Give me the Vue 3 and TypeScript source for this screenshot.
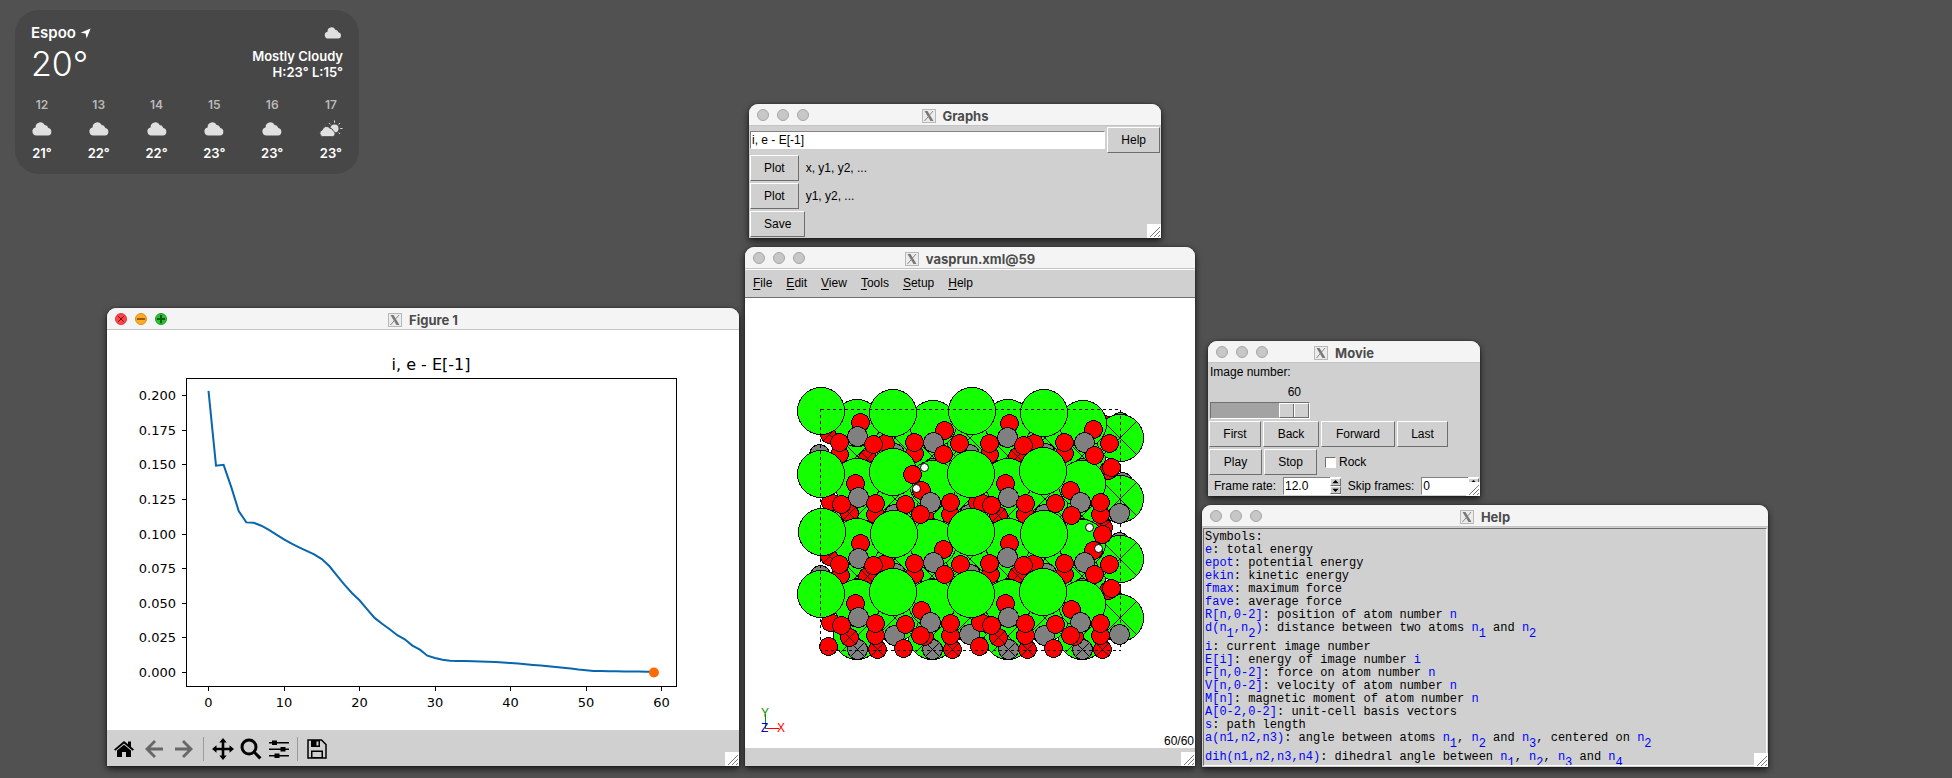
<script setup lang="ts">
import { ref } from 'vue'

interface DesktopWindow {
  id: 'graphs' | 'viewer' | 'figure' | 'movie' | 'help'
  title: string
  active?: boolean
}

const windows: DesktopWindow[] = [
  { id: 'graphs', title: 'Graphs' },
  { id: 'viewer', title: 'vasprun.xml@59' },
  { id: 'figure', title: 'Figure 1', active: true },
  { id: 'movie', title: 'Movie' },
  { id: 'help', title: 'Help' },
]

const hours = [
  { hour: '12', temp: '21°', sun: false },
  { hour: '13', temp: '22°', sun: false },
  { hour: '14', temp: '22°', sun: false },
  { hour: '15', temp: '23°', sun: false },
  { hour: '16', temp: '23°', sun: false },
  { hour: '17', temp: '23°', sun: true },
]

const menus = ['File', 'Edit', 'View', 'Tools', 'Setup', 'Help']

const expression = ref('i, e - E[-1]')
const imageNumber = ref(60)
const rock = ref(false)
const frameRate = ref('12.0')
const skipFrames = ref('0')

/* Energies relative to the last image */
const energies = [
  0.2033, 0.1493, 0.15, 0.134, 0.1166, 0.1084, 0.1081, 0.106, 0.103, 0.0995,
  0.0962, 0.093, 0.0904, 0.0879, 0.0853, 0.0819, 0.0769, 0.0702, 0.0634, 0.0574,
  0.0521, 0.0458, 0.0394, 0.0352, 0.0312, 0.0269, 0.024, 0.0194, 0.0165, 0.0121,
  0.0105, 0.0092, 0.0085, 0.0084, 0.0083, 0.0081, 0.0079, 0.0077, 0.0075, 0.0072,
  0.0068, 0.0064, 0.0059, 0.0055, 0.005, 0.0045, 0.004, 0.0034, 0.0028, 0.0021,
  0.0016, 0.001, 0.001, 0.0009, 0.0009, 0.0008, 0.0008, 0.0007, 0.0006, 0.0005,
]
const px = (i: number): number => 101.5 + i * 7.55
const py = (e: number): number => 342.5 - e * 1385
const curve = energies.map((e, i) => `${px(i).toFixed(1)},${py(e).toFixed(1)}`).join(' ')
const xTicks = [0, 10, 20, 30, 40, 50, 60]
const yTicks = [0, 0.025, 0.05, 0.075, 0.1, 0.125, 0.15, 0.175, 0.2]

/* Atoms, listed from the back of the cell to the front */
type Point = [number, number]
interface Layer {
  kind: 'cl' | 'o' | 'c' | 'h'
  r: number
  fixed?: boolean
  at: Point[]
}
const grid = (xs: number[], ys: number[]): Point[] => ys.flatMap(y => xs.map(x => [x, y] as Point))

const layers: Layer[] = [
  { kind: 'cl', r: 23.5, fixed: true, at: grid([112, 187, 263, 337], [158, 218, 278, 338]) },
  { kind: 'c', r: 10, at: [[375, 124], [377, 184], [374, 244], [374, 305]] },
  { kind: 'o', r: 9, at: [[357, 125]] },
  { kind: 'cl', r: 23.5, fixed: true, at: grid([150, 225, 300], [140, 201, 261, 320]) },
  { kind: 'cl', r: 23.5, fixed: true, at: grid([375], [140, 201, 261, 320]) },
  { kind: 'c', r: 10, fixed: true, at: grid([112, 187, 263, 337], [170, 230, 290, 351]) },
  {
    kind: 'c', r: 10, at: [
      [74, 156], [149, 155], [224, 156], [300, 155], [149, 216], [224, 216], [299, 216],
      [75, 277], [150, 275], [225, 276], [301, 275], [149, 337], [224, 336], [299, 337],
    ],
  },
  {
    kind: 'o', r: 9, fixed: true, at: [
      [84, 136], [122, 160], [272, 158], [363, 172], [104, 215], [253, 217], [84, 258],
      [122, 278], [272, 277], [358, 229], [363, 292], [104, 339], [253, 339],
      [132, 351], [207, 351], [282, 351], [357, 351],
    ],
  },
  {
    kind: 'o', r: 9, at: [
      [140, 145], [94, 156], [169, 155], [289, 145], [244, 156], [319, 155],
      [85, 204], [130, 216], [205, 216], [232, 204], [237, 205], [280, 216], [179, 217],
      [140, 265], [95, 277], [169, 276], [289, 265], [245, 276], [319, 276],
      [85, 324], [130, 337], [205, 337], [235, 324], [280, 337], [355, 337],
      [179, 338], [329, 338], [355, 216],
    ],
  },
  {
    kind: 'cl', r: 23.5, at: [
      [112, 125], [188, 126], [263, 125], [338, 126], [112, 184], [188, 186], [263, 184], [337, 186],
      [112, 244], [188, 245], [263, 244], [337, 245], [112, 305], [187, 305], [263, 305], [337, 306],
    ],
  },
  {
    kind: 'o', r: 9, at: [
      [115, 124], [199, 132], [264, 125], [348, 131], [110, 185], [176, 192], [260, 185], [325, 192],
      [115, 245], [198, 251], [264, 245], [348, 252], [110, 305], [176, 312], [260, 305], [326, 311],
    ],
  },
  {
    kind: 'c', r: 10, at: [
      [112, 138], [188, 144], [262, 139], [339, 144], [113, 199], [185, 204], [263, 199], [335, 204],
      [113, 260], [188, 264], [262, 259], [339, 264], [113, 319], [185, 324], [263, 319], [335, 324],
    ],
  },
  {
    kind: 'o', r: 9, at: [
      [94, 144], [128, 146], [169, 144], [214, 145], [198, 156],
      [244, 145], [278, 147], [319, 144], [364, 145], [349, 157],
      [96, 206], [130, 205], [160, 206], [205, 204], [175, 216],
      [246, 207], [280, 205], [310, 205], [355, 204], [326, 217],
      [94, 266], [128, 267], [169, 265], [215, 266], [199, 276],
      [244, 265], [278, 267], [319, 265], [364, 266], [349, 276],
      [96, 327], [130, 325], [160, 326], [205, 325], [175, 337],
      [246, 327], [280, 325], [310, 326], [355, 325], [325, 337],
      [83, 348], [158, 350], [234, 348], [308, 350], [366, 169], [366, 290], [357, 236],
    ],
  },
  {
    kind: 'cl', r: 23.5, at: [
      [76, 113], [148, 115], [227, 113], [299, 115], [76, 176], [148, 174], [226, 176], [298, 173],
      [77, 234], [149, 236], [226, 234], [299, 236], [76, 296], [148, 294], [226, 296], [298, 294],
    ],
  },
  { kind: 'o', r: 9, at: [[167, 176]] },
  { kind: 'h', r: 4, at: [[179, 169], [171, 190], [344, 229], [353, 250]] },
]
const atoms = layers.flatMap(l => {
  const shift = l.kind === 'cl' ? 0 : 0.5
  return l.at.map(([x, y]) => ({ x: x + shift, y: y + shift, r: l.r, kind: l.kind, d: l.fixed ? l.r * 0.7 : 0 }))
})
const cornerAtoms: Point[] = [[374.5, 215.5], [374.5, 336.5]]

/* Help text: `code` marks an expression, `sub` its lowered index */
type Part = [string, ('code' | 'sub')?]
const n = (i: number): Part[] => [['n', 'code'], [String(i), 'sub']]
const helpLines: Part[][] = [
  [['Symbols:']],
  [['e', 'code'], [': total energy']],
  [['epot', 'code'], [': potential energy']],
  [['ekin', 'code'], [': kinetic energy']],
  [['fmax', 'code'], [': maximum force']],
  [['fave', 'code'], [': average force']],
  [['R[n,0-2]', 'code'], [': position of atom number '], ['n', 'code']],
  [['d(n', 'code'], ['1', 'sub'], [',n', 'code'], ['2', 'sub'], [')', 'code'], [': distance between two atoms '], ...n(1), [' and '], ...n(2)],
  [['i', 'code'], [': current image number']],
  [['E[i]', 'code'], [': energy of image number '], ['i', 'code']],
  [['F[n,0-2]', 'code'], [': force on atom number '], ['n', 'code']],
  [['V[n,0-2]', 'code'], [': velocity of atom number '], ['n', 'code']],
  [['M[n]', 'code'], [': magnetic moment of atom number '], ['n', 'code']],
  [['A[0-2,0-2]', 'code'], [': unit-cell basis vectors']],
  [['s', 'code'], [': path length']],
  [['a(n1,n2,n3)', 'code'], [': angle between atoms '], ...n(1), [', '], ...n(2), [' and '], ...n(3), [', centered on '], ...n(2)],
  [['dih(n1,n2,n3,n4)', 'code'], [': dihedral angle between '], ...n(1), [', '], ...n(2), [', '], ...n(3), [' and '], ...n(4)],
]
</script>

<template>
  <main class="desktop">
    <section class="weather" aria-label="Weather">
      <div class="weather-now">
        <div>
          <div class="city">
            Espoo
            <svg width="11" height="11" viewBox="0 0 11 11" aria-hidden="true"><path d="M10.6.4 6.6 10.4 5.6 5.6.6 4.8z" /></svg>
          </div>
          <div class="temp-now">20°</div>
        </div>
        <div class="summary">
          <svg class="cloud-small" viewBox="0 0 20 14" aria-hidden="true"><path d="M4.4 13.5A4.1 4.1 0 0 1 3.6 5.4A4.8 4.8 0 0 1 12.7 3.1A4 4 0 0 1 16.3 6A3.8 3.8 0 0 1 16 13.5z" /></svg>
          <div>Mostly Cloudy</div>
          <div>H:23° L:15°</div>
        </div>
      </div>
      <ul class="hours">
        <li v-for="h in hours" :key="h.hour">
          <span class="hour">{{ h.hour }}</span>
          <svg v-if="!h.sun" width="20" height="18" viewBox="0 -2 20 18" aria-hidden="true">
            <path d="M4.4 13.5A4.1 4.1 0 0 1 3.6 5.4A4.8 4.8 0 0 1 12.7 3.1A4 4 0 0 1 16.3 6A3.8 3.8 0 0 1 16 13.5z" />
          </svg>
          <svg v-else width="24" height="18" viewBox="0 0 24 18" aria-hidden="true">
            <circle cx="15.5" cy="8.5" r="4" />
            <path class="rays" d="M15.5 .5v2.2M10 3l1.4 1.5M21 3l-1.4 1.5M23.5 8.5h-2.3M21 14l-1.4-1.5" />
            <path class="front-cloud" d="M3.7 16.7A3.5 3.5 0 0 1 3.3 9.9A4.3 4.3 0 0 1 11 8.2A3.7 3.7 0 0 1 14.2 10.8A3.1 3.1 0 0 1 13.8 16.7z" />
          </svg>
          <span class="temp">{{ h.temp }}</span>
        </li>
      </ul>
    </section>

    <section v-for="w in windows" :key="w.id" class="window" :class="w.id" :aria-label="w.title">
      <header class="titlebar">
        <div class="lights" :class="{ active: w.active }">
          <button type="button" class="light close" aria-label="Close">
            <svg v-if="w.active" viewBox="0 0 12 12"><path d="M3.2 3.2l5.6 5.6M8.8 3.2l-5.6 5.6" stroke="#7a0a0c" /></svg>
          </button>
          <button type="button" class="light minimise" aria-label="Minimise">
            <svg v-if="w.active" viewBox="0 0 12 12"><path d="M2 6h8" stroke="#985712" stroke-width="2" /></svg>
          </button>
          <button type="button" class="light expand" aria-label="Zoom">
            <svg v-if="w.active" viewBox="0 0 12 12"><path d="M2 6h8M6 2v8" stroke="#0b5a12" stroke-width="2" /></svg>
          </button>
        </div>
        <h2>
          <svg width="14" height="14" viewBox="0 0 14 14" aria-hidden="true">
            <rect x=".5" y=".5" width="13" height="13" fill="#ececec" stroke="#b8b8b8" />
            <path d="M2.5 2h3L11.5 12h-3z" fill="#777" />
            <path d="M11 2 2.5 12" stroke="#888" />
          </svg>
          {{ w.title }}
        </h2>
      </header>

      <form v-if="w.id === 'graphs'" class="panel graphs-form" @submit.prevent>
        <div class="row">
          <input v-model="expression" class="field expression" type="text" aria-label="Expression">
          <button type="button" class="tk">Help</button>
        </div>
        <div class="row"><button type="button" class="tk">Plot</button><span>x, y1, y2, ...</span></div>
        <div class="row"><button type="button" class="tk">Plot</button><span>y1, y2, ...</span></div>
        <div class="row"><button type="button" class="tk">Save</button></div>
      </form>

      <template v-else-if="w.id === 'viewer'">
        <nav class="menubar">
          <button v-for="m in menus" :key="m" type="button"><u>{{ m[0] }}</u>{{ m.slice(1) }}</button>
        </nav>
        <svg class="scene" viewBox="0 0 450 450" role="img" aria-label="Atomic structure">
          <g v-for="(a, i) in atoms" :key="i" :class="a.kind">
            <circle :cx="a.x" :cy="a.y" :r="a.r" />
            <path v-if="a.d" :d="`M${a.x - a.d} ${a.y - a.d}L${a.x + a.d} ${a.y + a.d}M${a.x + a.d} ${a.y - a.d}L${a.x - a.d} ${a.y + a.d}`" />
          </g>
          <rect class="cell" x="75.5" y="111.5" width="300" height="241" />
          <g v-for="(p, i) in cornerAtoms" :key="'c' + i" class="c"><circle :cx="p[0]" :cy="p[1]" r="10" /></g>
          <path d="M20.5 430.5V416" stroke="#0a8f0a" />
          <path d="M20.5 430.5H34" stroke="red" />
          <text x="16" y="419" fill="#0a8f0a">Y</text>
          <text x="16" y="434" fill="#00c">Z</text>
          <text x="32" y="434" fill="red">X</text>
          <text x="449" y="447" text-anchor="end">60/60</text>
        </svg>
        <footer class="status" />
      </template>

      <template v-else-if="w.id === 'figure'">
        <svg class="plot" viewBox="0 0 632 400" role="img" aria-label="i, e - E[-1]">
          <text class="plot-title" x="324" y="40" text-anchor="middle">i, e - E[-1]</text>
          <rect class="axis" x="79.5" y="48.5" width="490" height="308" />
          <g v-for="t in xTicks" :key="'x' + t">
            <path class="axis" :d="`M${Math.floor(px(t)) + 0.5} 357v4`" />
            <text :x="px(t)" y="377" text-anchor="middle">{{ t }}</text>
          </g>
          <g v-for="t in yTicks" :key="'y' + t">
            <path class="axis" :d="`M79 ${Math.floor(py(t)) + 0.5}h-4`" />
            <text x="69" :y="Math.round(py(t) + 4.6)" text-anchor="end">{{ t.toFixed(3) }}</text>
          </g>
          <polyline class="curve" :points="curve" />
          <circle :cx="px(59)" cy="342.5" r="5" fill="#ff6a00" />
        </svg>
        <footer class="toolbar">
          <button type="button" class="wide" aria-label="Home">
            <svg viewBox="0 0 22 22"><path d="M1 11.5 11 3l4 3.3V3.5h3v5.3l3 2.7-1.3 1.3L11 5.4 2.3 12.8z" /><path d="M4 12.5 11 6.8l7 5.7V19h-5v-5H9v5H4z" /></svg>
          </button>
          <button type="button" class="wide dim" aria-label="Back">
            <svg viewBox="0 0 22 22"><path d="M11 2 2 11l9 9 2-2-5.5-5.5H20v-3H7.5L13 4z" /></svg>
          </button>
          <button type="button" class="wide dim" aria-label="Forward">
            <svg viewBox="0 0 22 22"><path d="M11 2l9 9-9 9-2-2 5.5-5.5H2v-3h12.5L9 4z" /></svg>
          </button>
          <i class="sep" />
          <button type="button" aria-label="Pan">
            <svg viewBox="0 0 22 22"><path d="M11 0l3.7 4.5h-2.4v5.2h5.2V7.3L22 11l-4.5 3.7v-2.4h-5.2v5.2h2.4L11 22l-3.7-4.5h2.4v-5.2H4.5v2.4L0 11l4.5-3.7v2.4h5.2V4.5H7.3z" /></svg>
          </button>
          <button type="button" aria-label="Zoom to rectangle">
            <svg viewBox="0 0 22 22"><circle cx="9" cy="9" r="7" fill="none" stroke="#000" stroke-width="3" /><path d="M13 15l2-2 6.5 6.2-2.3 2.2z" /></svg>
          </button>
          <button type="button" aria-label="Configure subplots">
            <svg viewBox="0 0 22 22"><path d="M1 4h20v1.5H1zM1 10.5h20V12H1zM1 17h20v1.5H1zM4 2.5h5V7H4zM12.500 9h5v4.500h-5zM6.500 15.500h5V20h-5z" /></svg>
          </button>
          <i class="sep" />
          <button type="button" aria-label="Save figure">
            <svg viewBox="0 0 22 22"><path d="M2 2h13.5L20 6.5V20H2z" fill="none" stroke="#000" stroke-width="1.5" /><path d="M5 2h9v7H5zM5 12.5h12V20H5z" /><path d="M10.5 3.5h2v4h-2zM6.500 14h9v5h-9z" fill="#d0d0d0" /></svg>
          </button>
        </footer>
      </template>

      <form v-else-if="w.id === 'movie'" class="panel movie-form" @submit.prevent>
        <label for="image-number">Image number:</label>
        <output for="image-number">{{ imageNumber }}</output>
        <input id="image-number" v-model.number="imageNumber" type="range" min="1" max="60">
        <div class="steps">
          <button type="button" class="tk">First</button>
          <button type="button" class="tk">Back</button>
          <button type="button" class="tk">Forward</button>
          <button type="button" class="tk">Last</button>
        </div>
        <div class="playback">
          <button type="button" class="tk">Play</button>
          <button type="button" class="tk">Stop</button>
          <label class="check"><input v-model="rock" type="checkbox">Rock</label>
        </div>
        <div class="row rates">
          <label for="rate">Frame rate:</label>
          <span class="spin">
            <input id="rate" v-model="frameRate" class="field" type="text">
            <span class="arrows">
              <button type="button" aria-label="Increase frame rate"><svg viewBox="0 0 8 5"><path d="M4 0l4 4H0z" /></svg></button>
              <button type="button" aria-label="Decrease frame rate"><svg viewBox="0 0 8 5"><path d="M0 1h8L4 5z" /></svg></button>
            </span>
          </span>
          <label for="skip">Skip frames:</label>
          <span class="spin">
            <input id="skip" v-model="skipFrames" class="field" type="text">
            <span class="arrows">
              <button type="button" aria-label="Increase skipped frames"><svg viewBox="0 0 8 5"><path d="M4 0l4 4H0z" /></svg></button>
              <button type="button" aria-label="Decrease skipped frames"><svg viewBox="0 0 8 5"><path d="M0 1h8L4 5z" /></svg></button>
            </span>
          </span>
        </div>
      </form>

      <div v-else class="panel">
        <div class="help-text">
          <p v-for="(line, i) in helpLines" :key="i"><span v-for="(part, j) in line" :key="j" :class="part[1]">{{ part[0] }}</span></p>
        </div>
      </div>

      <svg class="grip" width="14" height="14" viewBox="0 0 14 14" aria-hidden="true">
        <rect width="14" height="14" fill="#fff" />
        <path d="M3 13 13 3M7 13l6-6M11 13l2-2" stroke="#777" />
      </svg>
    </section>
  </main>
</template>

<style>
body {
  margin: 0;
  background: #515151;
}
</style>

<style scoped>
.desktop {
  position: relative;
  min-height: 100vh;
  overflow: hidden;
  background: #515151;
  font: 12px/14px "Liberation Sans", Arial, sans-serif;
  color: #000;
}
button,
input {
  font: inherit;
  color: inherit;
  margin: 0;
  padding: 0;
  border: 0;
  border-radius: 0;
  background: none;
  box-sizing: border-box;
}

/* Weather widget */
.weather {
  position: absolute;
  left: 15px;
  top: 10px;
  width: 344px;
  box-sizing: border-box;
  padding: 14px 16px 12px;
  border-radius: 24px;
  background: #474747;
  color: #fff;
  font: 600 13px/16px Inter, sans-serif;
}
.weather svg {
  fill: #e0e0e0;
}
.weather-now {
  display: flex;
  justify-content: space-between;
}
.city {
  display: flex;
  align-items: center;
  gap: 4px;
  font-size: 15px;
  line-height: 18px;
}
.weather .city svg {
  fill: #fff;
}
.temp-now {
  font-size: 34px;
  line-height: 44px;
  font-weight: 300;
}
.summary {
  display: flex;
  flex-direction: column;
  align-items: flex-end;
}
.cloud-small {
  width: 18px;
  height: 12px;
  margin: 3px 1px 9px 0;
}
.hours {
  display: flex;
  justify-content: space-between;
  list-style: none;
  margin: 11px 0 0;
  padding: 0 0 0 1px;
}
.hours li {
  display: flex;
  flex-direction: column;
  align-items: center;
}
.hour {
  color: #b9b9b9;
  font-size: 12px;
}
.hours svg {
  margin: 7px 0;
}
.temp {
  padding-bottom: 1px;
}
.rays {
  stroke: #e0e0e0;
}
.front-cloud {
  stroke: #474747;
}

/* Window frame */
.window {
  position: absolute;
  border-radius: 9px 9px 0 0;
  background: #d0d0d0;
  box-shadow: 0 3px 7px rgba(0, 0, 0, 0.7), 0 0 2px rgba(0, 0, 0, 0.5);
}
.graphs { left: 749px; top: 104px; width: 412px; }
.viewer { left: 745px; top: 247px; width: 450px; }
.figure { left: 107px; top: 308px; width: 632px; }
.movie { left: 1208px; top: 341px; width: 272px; }
.help { left: 1202px; top: 505px; width: 566px; }
.titlebar {
  display: grid;
  grid-template-columns: 1fr auto 1fr;
  align-items: center;
  height: 22px;
  box-sizing: border-box;
  border-bottom: 1px solid #c4c4c4;
  border-radius: 9px 9px 0 0;
  background: #f4f4f4;
}
.lights {
  display: flex;
  gap: 8px;
  padding-left: 8px;
}
.light {
  display: flex;
  width: 12px;
  height: 12px;
  border: 1px solid #a6a6a6;
  border-radius: 50%;
  background: #c7c7c7;
}
.light svg {
  width: 12px;
  height: 12px;
  margin: -1px;
  flex: none;
}
.active .close { background: #fc4648; border-color: #dd3a3c; }
.active .minimise { background: #fdab24; border-color: #da8f1c; }
.active .expand { background: #28c231; border-color: #1d9c25; }
.titlebar h2 {
  display: flex;
  align-items: center;
  gap: 7px;
  margin: 0;
  padding-top: 2px;
  color: #4c4c4c;
  font: 700 13px/18px Inter, sans-serif;
}
.grip {
  position: absolute;
  right: 0;
  bottom: 0;
}

/* Toolkit controls */
.panel {
  padding: 1px;
}
.row {
  display: flex;
  align-items: center;
  gap: 2px;
}
.tk {
  padding: 5px 13px;
  border: 1px solid;
  border-color: #fff #6e6e6e #6e6e6e #fff;
  background: #d0d0d0;
}
.field {
  height: 18px;
  padding: 0 1px;
  border: 1px solid;
  border-color: #828282 #fff #fff #828282;
  background: #fff;
  outline: 0;
}
.graphs-form {
  display: flex;
  flex-direction: column;
  gap: 2px;
}
.graphs-form span {
  padding-left: 5px;
}
.expression {
  flex: 1;
}

/* Structure viewer */
.menubar {
  display: flex;
  gap: 14px;
  padding: 7px 8px;
  border-top: 1px solid #fff;
  border-bottom: 1px solid #707070;
}
.menubar button {
  line-height: 13px;
}
.menubar u {
  text-underline-offset: 2px;
}
.scene,
.plot {
  display: block;
  width: 100%;
  background: #fff;
}
.scene {
  shape-rendering: crispEdges;
}
.scene circle,
.scene g path {
  stroke: #000;
}
.cl { fill: #14ff00; }
.o { fill: #f00; }
.c { fill: #808080; }
.h {
  fill: #fff;
  shape-rendering: geometricPrecision;
}
.cell {
  fill: none;
  stroke: #000;
  stroke-dasharray: 3 3;
}
.status {
  height: 18px;
}

/* Plot */
.plot {
  font: 13px "DejaVu Sans", sans-serif;
}
.plot-title {
  font-size: 16px;
}
.axis {
  fill: none;
  stroke: #000;
}
.curve {
  fill: none;
  stroke: #0766ad;
  stroke-width: 2;
}
.toolbar {
  display: flex;
  align-items: center;
  height: 36px;
  box-sizing: border-box;
  padding: 2px 0 0 2px;
}
.toolbar button {
  display: flex;
  justify-content: center;
  width: 28px;
}
.toolbar .wide {
  width: 30px;
}
.toolbar svg {
  width: 22px;
  height: 22px;
}
.toolbar .dim {
  opacity: 0.5;
}
.sep {
  width: 1px;
  height: 24px;
  margin: 0 5px 0 4px;
  background: #9a9a9a;
}

/* Movie */
.movie-form {
  display: flex;
  flex-direction: column;
  align-items: flex-start;
  gap: 2px;
}
.movie-form > label {
  padding: 1px 1px 4px;
}
.movie-form output {
  width: 92px;
  text-align: right;
}
.movie-form input[type="range"] {
  appearance: none;
  width: 100px;
  height: 17px;
  margin: 1px 1px 0;
  border: 1px solid;
  border-color: #707070 #fff #fff #707070;
  background: #a3a3a3;
}
.movie-form input[type="range"]::-webkit-slider-thumb {
  appearance: none;
  width: 30px;
  height: 15px;
  border: 1px solid;
  border-color: #fff #6e6e6e #6e6e6e #fff;
  background: linear-gradient(90deg, #d0d0d0 13px, #6e6e6e 13px 14px, #fff 14px 15px, #d0d0d0 15px);
}
.steps,
.playback {
  display: grid;
  gap: 2px;
}
.steps {
  grid-template-columns: 52px 56px 74px 51px;
}
.playback {
  grid-template-columns: 53px 53px auto;
}
.steps .tk,
.playback .tk {
  padding: 5px 0;
}
.check {
  display: flex;
  align-items: center;
  gap: 3px;
  padding-left: 6px;
}
.check input {
  appearance: none;
  width: 11px;
  height: 11px;
  border: 1px solid;
  border-color: #707070 #fff #fff #707070;
  background: #fff;
}
.rates {
  align-self: stretch;
  gap: 7px;
  padding-left: 5px;
}
.spin {
  display: flex;
  flex: 1;
  background: #fff;
}
.spin .field {
  flex: 1;
  width: 0;
  border-right: 0;
}
.arrows {
  display: flex;
  flex-direction: column;
  width: 11px;
  padding: 1px 0;
}
.arrows button {
  display: flex;
  flex: 1;
  align-items: center;
  justify-content: center;
  border: 1px solid;
  border-color: #fff #6e6e6e #6e6e6e #fff;
  background: #d0d0d0;
}
.arrows svg {
  width: 7px;
  height: 4px;
}

/* Help text */
.help-text {
  height: 238px;
  box-sizing: border-box;
  padding: 2px 1px 0;
  overflow: hidden;
  border: 1px solid;
  border-color: #6e6e6e #fff #fff #6e6e6e;
  font: 12px/13px "Liberation Mono", monospace;
}
.help-text p {
  margin: 0;
  white-space: pre;
}
.code,
.sub {
  color: #00f;
}
.sub {
  vertical-align: -6px;
}
</style>
